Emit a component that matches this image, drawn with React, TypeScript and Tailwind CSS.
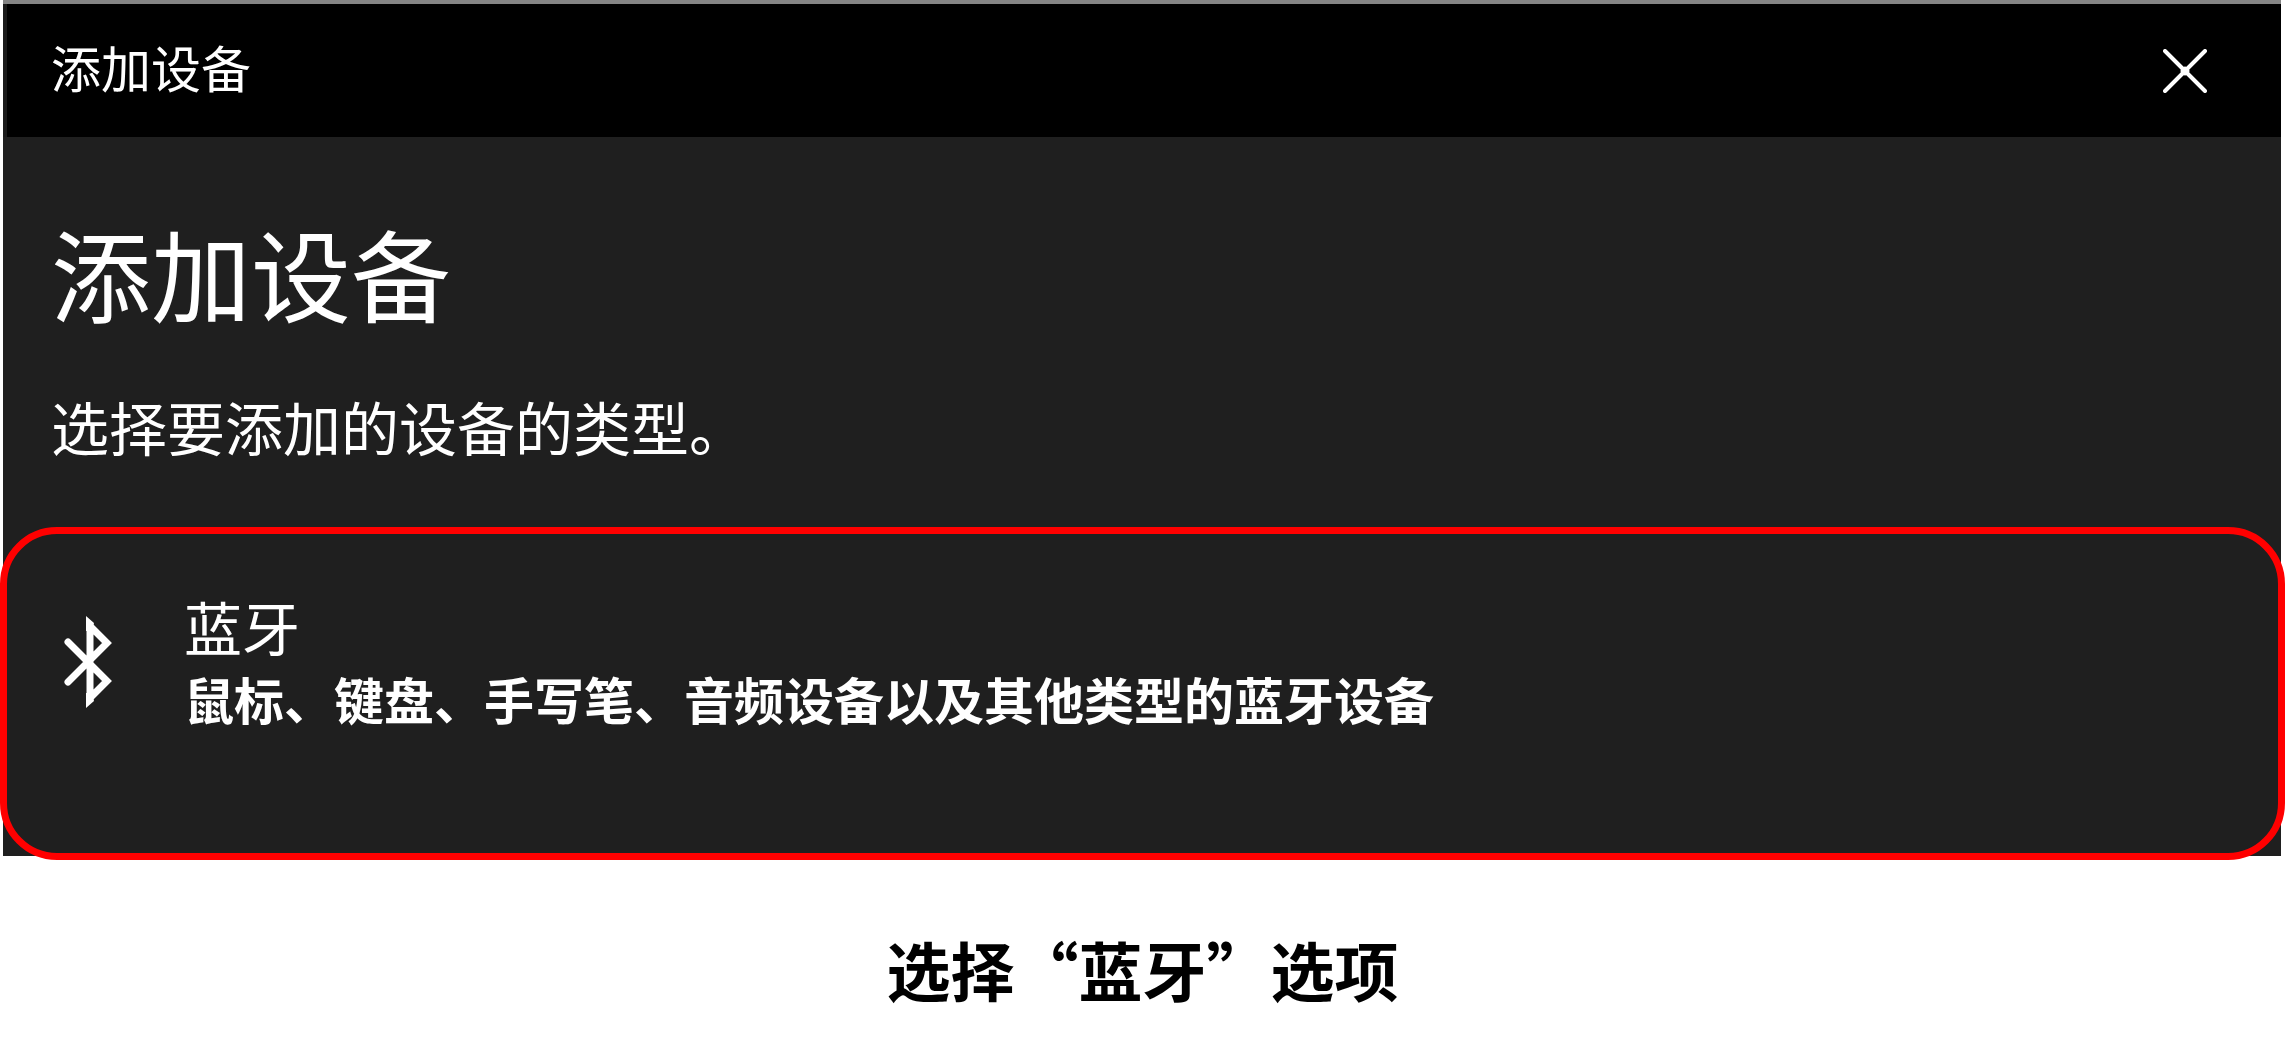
type DeviceOptionProps = {
  title: string;
  text: string;
};

function CloseIcon() {
  return (
    <svg
      className="w-11 h-11"
      viewBox="0 0 44 44"
      fill="none"
      stroke="currentColor"
      strokeWidth="4"
      strokeLinecap="round"
    >
      <path d="M2 2l40 40M42 2L2 42" />
      <path d="M20 22h4M22 20v4" strokeWidth="5" />
    </svg>
  );
}

function BluetoothIcon() {
  return (
    <svg
      className="w-14 h-24 shrink-0"
      viewBox="0 0 56 96"
      fill="none"
      stroke="currentColor"
      strokeWidth="7"
    >
      <path
        d="M9 28L29 48L48 67L31 84V12L48 29L29 48L9 68"
        strokeLinecap="round"
      />
      <path d="M27 2l8 7-2 8h-6zM27 94l8-7-2-8h-6z" fill="currentColor" stroke="none" />
    </svg>
  );
}

function DeviceOption({ title, text }: DeviceOptionProps) {
  return (
    <button
      type="button"
      className="flex items-start w-full border-[7px] border-[#ff0000] rounded-[57px] pl-13 pr-12 pt-14 pb-[119px] text-left"
    >
      <div className="pt-6">
        <BluetoothIcon />
      </div>
      <div className="pl-[69px]">
        <div className="text-[58px] leading-[72px]">{title}</div>
        <div className="text-[50px] leading-[72px] font-bold">{text}</div>
      </div>
    </button>
  );
}

export default function App() {
  return (
    <div
      lang="zh-CN"
      className="bg-white text-white font-['Noto_Sans_CJK_SC',sans-serif]"
    >
      {/* Dialog window */}
      <section className="flow-root ml-[3px] mr-1 bg-[#1f1f1f]">
        <header className="flex items-center justify-between border-t-4 border-[#858585] bg-black">
          <div className="self-stretch w-1 bg-[#1a1a1a]"></div>
          <h2 className="flex-1 pl-11 pb-2 text-[50px] leading-[125px]">添加设备</h2>
          <button type="button" aria-label="关闭" className="mr-[70px] p-1">
            <CloseIcon />
          </button>
        </header>

        <div className="px-12 pt-[85px]">
          <h1 className="text-[100px] leading-[100px]">添加设备</h1>
          <p className="mt-[74px] text-[58px] leading-[60px]">
            选择要添加的设备的类型。
          </p>
        </div>

        {/* Highlighted option, slightly wider than the window */}
        <div className="mt-[71px] ml-[-3px] -mr-1 -mb-1">
          <DeviceOption
            title="蓝牙"
            text="鼠标、键盘、手写笔、音频设备以及其他类型的蓝牙设备"
          />
        </div>
      </section>

      {/* Caption */}
      <p className="pt-19 pb-11 text-center text-[64px] leading-[72px] font-bold text-black">
        选择“蓝牙”选项
      </p>
    </div>
  );
}
